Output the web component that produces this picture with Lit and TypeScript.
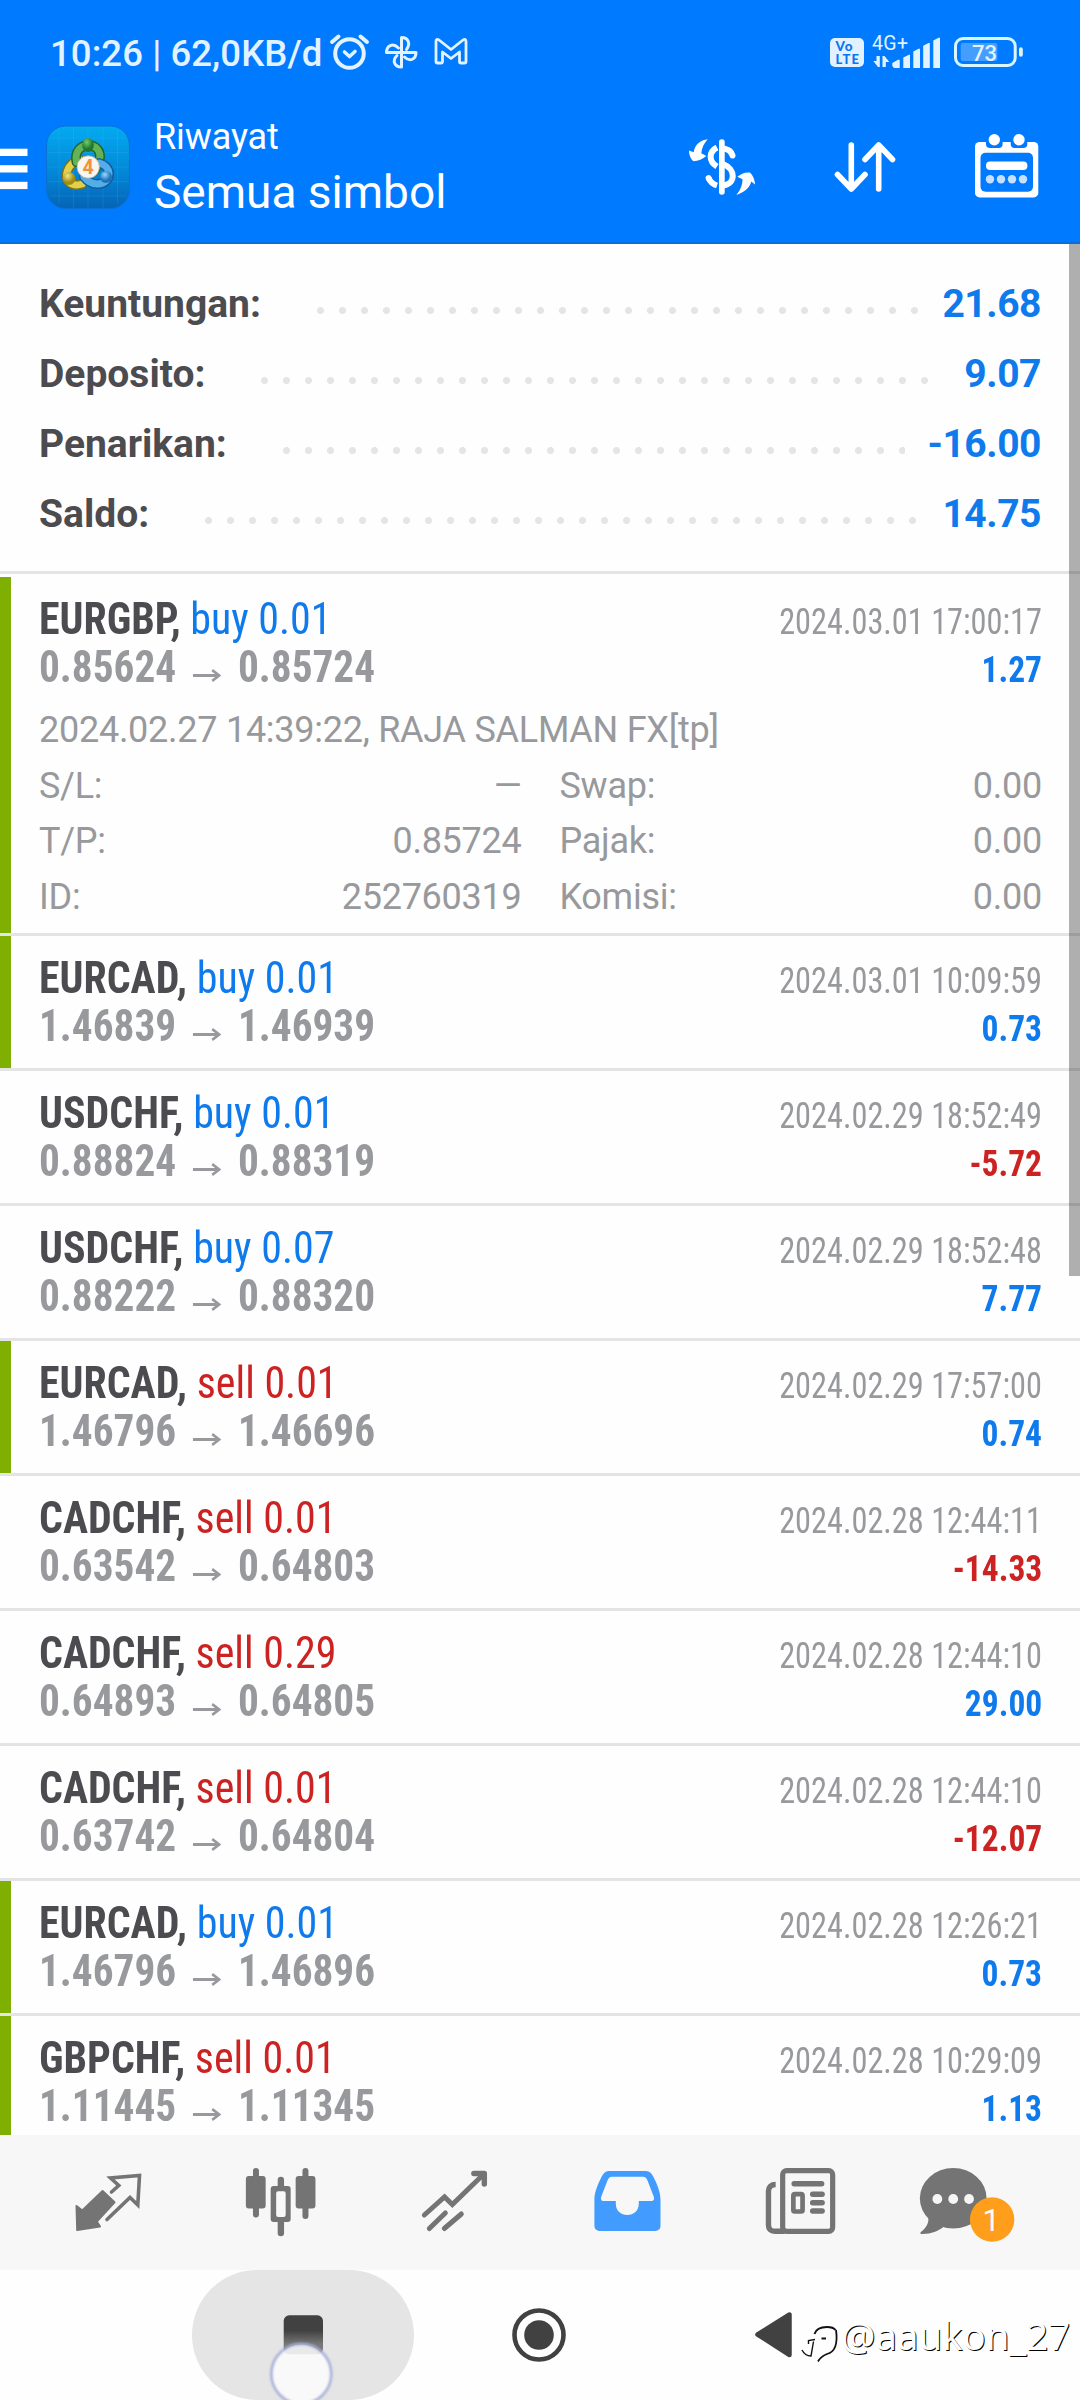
import { LitElement, html, css, svg, nothing } from "lit";
import { customElement, property } from "lit/decorators.js";

interface Deal {
  symbol: string;
  side: "buy" | "sell";
  lots: string;
  open: string;
  close: string;
  time: string;
  profit: string;
  target?: boolean;
  note?: string;
  details?: [string, string][];
}

const DEALS: Deal[] = [
  {
    symbol: "EURGBP", side: "buy", lots: "0.01", open: "0.85624", close: "0.85724",
    time: "2024.03.01 17:00:17", profit: "1.27", target: true,
    note: "2024.02.27 14:39:22, RAJA SALMAN FX[tp]",
    details: [["S/L:", "—"], ["Swap:", "0.00"], ["T/P:", "0.85724"], ["Pajak:", "0.00"], ["ID:", "252760319"], ["Komisi:", "0.00"]],
  },
  { symbol: "EURCAD", side: "buy", lots: "0.01", open: "1.46839", close: "1.46939", time: "2024.03.01 10:09:59", profit: "0.73", target: true },
  { symbol: "USDCHF", side: "buy", lots: "0.01", open: "0.88824", close: "0.88319", time: "2024.02.29 18:52:49", profit: "-5.72" },
  { symbol: "USDCHF", side: "buy", lots: "0.07", open: "0.88222", close: "0.88320", time: "2024.02.29 18:52:48", profit: "7.77" },
  { symbol: "EURCAD", side: "sell", lots: "0.01", open: "1.46796", close: "1.46696", time: "2024.02.29 17:57:00", profit: "0.74", target: true },
  { symbol: "CADCHF", side: "sell", lots: "0.01", open: "0.63542", close: "0.64803", time: "2024.02.28 12:44:11", profit: "-14.33" },
  { symbol: "CADCHF", side: "sell", lots: "0.29", open: "0.64893", close: "0.64805", time: "2024.02.28 12:44:10", profit: "29.00" },
  { symbol: "CADCHF", side: "sell", lots: "0.01", open: "0.63742", close: "0.64804", time: "2024.02.28 12:44:10", profit: "-12.07" },
  { symbol: "EURCAD", side: "buy", lots: "0.01", open: "1.46796", close: "1.46896", time: "2024.02.28 12:26:21", profit: "0.73", target: true },
  { symbol: "GBPCHF", side: "sell", lots: "0.01", open: "1.11445", close: "1.11345", time: "2024.02.28 10:29:09", profit: "1.13", target: true },
];

const SUMMARY: [string, string][] = [
  ["Keuntungan:", "21.68"],
  ["Deposito:", "9.07"],
  ["Penarikan:", "-16.00"],
  ["Saldo:", "14.75"],
];

@customElement("deal-row")
class DealRow extends LitElement {
  @property({ attribute: false }) deal!: Deal;

  static styles = css`
    :host { display: block; border-bottom: 3px solid #e4e4e4; }
    .row { position: relative; box-sizing: border-box; min-height: 132px; padding: 18px 38px 0 39px; }
    .row.target::before { content: ""; position: absolute; left: 0; top: 0; bottom: 0; width: 11px; background: #7faf00; }
    .line { display: flex; justify-content: space-between; align-items: baseline; height: 48px; line-height: 48px; font-size: 44px; white-space: nowrap; }
    .left { font-family: "Roboto Condensed", Roboto, sans-serif; font-stretch: 75%; transform-origin: 0 50%; transform: scaleX(0.953); }
    .right { font-family: "Roboto Condensed", Roboto, sans-serif; font-stretch: 75%; font-size: 36px; font-weight: 430; line-height: 42px; transform-origin: 100% 50%; transform: scaleX(0.897); color: #98999c; }
    .symbol { font-weight: 700; color: #4c4b50; }
    .buy, .gain { color: #0f7aec; }
    .sell, .loss { color: #cc2222; }
    .prices { font-weight: 700; color: #98999d; transform: scaleX(0.938); }
    .profit { font-weight: 700; transform: scaleX(0.93); }
    .right.gain { color: #0f7aec; }
    .right.loss { color: #cc2222; }
    .more { padding: 12px 0 8px; font-size: 36px; line-height: 55.5px; letter-spacing: -0.26px; color: #98999c; }
    .grid { display: grid; grid-template-columns: 1fr 1fr; column-gap: 38px; }
    .pair { display: flex; justify-content: space-between; }
    .arrow { display: inline-block; width: 29.5px; height: 13px; margin: 0 18.2px; }
  `;

  render() {
    const d = this.deal;
    return html`
      <div class="row ${d.target ? "target" : ""}">
        <div class="line">
          <span class="left"><span class="symbol">${d.symbol},</span> <span class=${d.side}>${d.side} ${d.lots}</span></span>
          <span class="right">${d.time}</span>
        </div>
        <div class="line">
          <span class="left prices">${d.open}<svg class="arrow" viewBox="0 0 30 13"><path d="M0 6.5H28M21 1L28.5 6.5L21 12" fill="none" stroke="#98999d" stroke-width="2.8"/></svg>${d.close}</span>
          <span class="right profit ${d.profit.startsWith("-") ? "loss" : "gain"}">${d.profit}</span>
        </div>
        ${d.note
          ? html`<div class="more">
              <div>${d.note}</div>
              <div class="grid">
                ${d.details!.map(([k, v]) => html`<div class="pair"><span>${k}</span><span>${v}</span></div>`)}
              </div>
            </div>`
          : nothing}
      </div>
    `;
  }
}

const TAB_ICONS = [
  svg`<path d="M111.5 2192L118.8 2185.5L110.5 2178L139.5 2175.5L137.8 2205L130 2197.5L107 2219.5" fill="none" stroke="#747474" stroke-width="3.6" stroke-linecap="round"/>
    <path d="M102.6 2191L114.5 2202.3L96.8 2221.5L100 2226.5L77.2 2230L76.5 2206L82.3 2210.5Z" fill="#747474" stroke="#747474" stroke-width="2" stroke-linejoin="round"/>`,
  svg`<g fill="#747474"><rect x="246.2" y="2176" width="19.8" height="32.5" rx="3"/><rect x="253.3" y="2168" width="6" height="49.5" rx="3"/>
    <path fill-rule="evenodd" d="M274 2186H288a3 3 0 0 1 3 3V2219a3 3 0 0 1-3 3H274a3 3 0 0 1-3-3V2189a3 3 0 0 1 3-3ZM278.5 2191.3a2 2 0 0 0-2 2V2215a2 2 0 0 0 2 2H284a2 2 0 0 0 2-2V2193.3a2 2 0 0 0-2-2Z"/>
    <path d="M278 2186V2180a3.2 3.2 0 0 1 6.4 0V2186ZM278 2221V2233a3.2 3.2 0 0 0 6.4 0V2221Z"/>
    <rect x="296" y="2176" width="19.8" height="32.5" rx="3"/><rect x="302.8" y="2168" width="6" height="51" rx="3"/></g>`,
  svg`<g fill="none" stroke="#747474" stroke-width="5" stroke-linecap="round"><path d="M424 2215L444.2 2197L452 2204.5L483 2174.5"/><path stroke-width="5.4" stroke-linejoin="round" d="M473.5 2173.5H484V2184"/><path d="M429 2228.5L445 2213M444 2228.5L461 2214"/></g>`,
  svg`<path fill="#429bff" fill-rule="evenodd" d="M609 2171H646C650 2171 652 2174 654 2178C658 2186 660.5 2193 660.5 2200V2226a5 5 0 0 1-5 5H599.4a5 5 0 0 1-5-5V2200C594.4 2193 597 2186 601 2178C603 2174 605 2171 609 2171ZM612 2176.7C609.5 2176.7 608.5 2178 607.5 2180.5L601.5 2196C600.5 2199 601 2201 604 2201H615.8V2203.5C615.8 2211 621 2215 627.3 2215C633.6 2215 638.8 2211 638.8 2203.5V2201H651C654 2201 654.7 2199 653.5 2196L647.5 2180.5C646.5 2178 645.5 2176.7 643 2176.7Z"/>`,
  svg`<g fill="none" stroke="#747474"><rect x="783" y="2170.7" width="50" height="60.6" rx="4" stroke-width="5.2"/><path stroke-width="5.4" d="M776 2184.5C771.5 2184.5 768.8 2187 768.8 2191V2225C768.8 2229 771 2231.3 775 2231.3H785"/><path stroke-width="5.4" stroke-linecap="round" d="M794.5 2183.7H822M813 2194.3H822.5M813 2202.7H822.5M813 2211H822.5"/><rect x="793.7" y="2194.2" width="9.2" height="17.3" rx="1.5" stroke-width="4.7"/></g>`,
  svg`<g fill="#747474"><ellipse cx="952.9" cy="2198.3" rx="33.4" ry="30.3"/><path d="M926 2213L928 2218.3C928.5 2223 926 2228 920.5 2232Q919 2234 922 2234C931 2234 938 2231 943 2227L950 2220Z"/></g>
    <g fill="#f6f6f6"><circle cx="937" cy="2199" r="4.9"/><circle cx="952.9" cy="2199" r="4.9"/><circle cx="968.7" cy="2199" r="4.9"/></g>
    <circle cx="991.8" cy="2219.5" r="22.2" fill="#ff9e1b"/><text x="991" y="2231" text-anchor="middle" font-family="Roboto, sans-serif" font-size="31" fill="#fff">1</text>`,
];

@customElement("app-root")
class AppRoot extends LitElement {
  static styles = css`
    :host { display: block; width: 1080px; height: 2400px; overflow: hidden; background: #fefefe; font-family: Roboto, "Liberation Sans", sans-serif; }
    .page { display: flex; flex-direction: column; height: 2400px; }
    .top { box-sizing: border-box; height: 244px; background: #007aff; border-bottom: 2px solid #0d6dd6; flex: none; }
    .status { display: flex; height: 100px; padding-left: 50px; color: #e2f3ff; }
    .clock { display: flex; align-items: center; width: 272px; flex: none; font-size: 36.5px; font-weight: 500; line-height: 42px; padding-top: 8px; letter-spacing: 0.08px; white-space: pre; }
    .bar { display: flex; height: 142px; }
    .bar svg, .status svg { display: block; flex: none; }
    .titles { flex: 1; display: flex; flex-direction: column; padding-left: 14px; color: #fff; white-space: nowrap; }
    .sub { font-size: 36px; line-height: 42px; padding-top: 16px; letter-spacing: -0.1px; }
    .main { font-size: 46px; line-height: 56px; padding-top: 6px; }
    .list { flex: 1; min-height: 0; overflow: hidden; position: relative; }
    .summary { box-sizing: border-box; height: 330px; padding: 25px 39px 0; border-bottom: 3px solid #e4e4e4; margin-bottom: 3px; font-size: 39px; font-weight: 700; line-height: 70px; }
    .sum { display: flex; height: 70px; }
    .label { color: #4c4b50; }
    .dots { flex: 1; margin: 38px 23px 25px 56px; background: radial-gradient(circle at 3.5px 3.5px, #e5e5e5 3.1px, transparent 3.9px) 0 0 / 22px 7px repeat-x; }
    .value { color: #0f7aec; letter-spacing: -0.45px; }
    .thumb { position: absolute; right: 0; top: 0; width: 11px; height: 1032px; background: rgba(0, 0, 0, 0.31); }
    .tabs { display: flex; height: 135px; padding: 0 20px; background: #f7f7f7; flex: none; }
    .tabs svg { display: block; flex: 1; min-width: 0; }
    .nav { position: relative; height: 130px; flex: none; }
    .nav svg { display: block; }
    .mark { position: absolute; left: 841px; top: 35px; font: 400 38.3px/60px "Noto Sans", sans-serif; color: #fff; text-shadow: 1px 1px 0 #000; white-space: nowrap; }
  `;

  render() {
    return html`
      <div class="page">
        <header class="top">
          <div class="status">
            <div class="clock">10:26 | 62,0KB/d</div>
            <svg width="758" height="100" viewBox="322 0 758 100">
              <g fill="none" stroke="#e2f3ff" stroke-linecap="round" stroke-linejoin="round">
                <circle cx="349.5" cy="53.5" r="14.3" stroke-width="4"/>
                <path stroke-width="4" d="M332 42L338.5 36.5M360.5 36.5L367 42"/>
                <path stroke-width="3.6" d="M344.5 52L349.5 56.5L355 51.5"/>
                <path stroke-width="3" d="M401.5 52.5V37.5C408 37.5 411 43 406.5 49.5M401.5 52.5H416C416 59 410 62.5 404.5 57M401.5 52.5V67C395 67 391.5 61 397 55.5M401.5 52.5H386.5C386.5 46 392.5 42 398.5 48"/>
                <path stroke-width="2.8" d="M436 61.5V41.5Q436 38.5 439 40L451 49.5L463 40Q466 38.5 466 41.5V61.5Q466 63 464.5 63H461Q459.5 63 459.5 61.5V52L451 58.5L442.5 52V61.5Q442.5 63 441 63H437.5Q436 63 436 61.5Z"/>
              </g>
              <rect x="830" y="38" width="34" height="29" rx="5" fill="#e2f1ff"/>
              <g font-family="Lato, sans-serif" font-weight="900" fill="#0a76ee"><text x="835.5" y="51" font-size="13.5" textLength="17">Vo</text><text x="835.5" y="63.5" font-size="13" textLength="23.5">LTE</text></g>
              <text x="872" y="50" font-family="Roboto, sans-serif" font-size="19.5" fill="#e2f3ff" textLength="36">4G+</text>
              <g fill="#e2f3ff">
                <path d="M879.8 56V67H878L873.3 61H876.5V56ZM882.5 67V56H884.5L889.3 62H885.8V67Z"/>
                <path d="M892.3 66V63L898 59.7H899.7V68H894ZM903.3 68V57.5L909 54.7H910V68ZM913.3 68V51.5L918.5 48.7H920V68ZM923.2 68V45.8L928.5 43H929.8V68ZM933.3 68V40.5L938.5 37.7H940V68Z"/>
                <rect x="960.7" y="43" width="36.6" height="18" rx="2" fill-opacity=".3"/>
                <rect x="1019" y="47.3" width="3.8" height="9.4" rx="1.9"/>
              </g>
              <rect x="955.5" y="38.5" width="59.7" height="27" rx="7.5" fill="none" stroke="#d9f6ff" stroke-width="3"/>
              <text x="984.5" y="61" text-anchor="middle" font-family="Roboto, sans-serif" font-weight="500" font-size="22" fill="#e2f3ff">73</text>
            </svg>
          </div>
          <div class="bar">
            <svg width="140" height="142" viewBox="0 100 140 142">
              <defs>
                <linearGradient id="tile" x1="0" y1="0" x2="0" y2="1"><stop offset="0" stop-color="#04aaf0"/><stop offset=".55" stop-color="#0288d8"/><stop offset="1" stop-color="#0663b5"/></linearGradient>
                <radialGradient id="green" cx=".4" cy=".3"><stop offset="0" stop-color="#7cc96a"/><stop offset="1" stop-color="#1c7a2e"/></radialGradient>
                <radialGradient id="gold" cx=".4" cy=".3"><stop offset="0" stop-color="#f3e884"/><stop offset="1" stop-color="#a08c14"/></radialGradient>
                <radialGradient id="sky" cx=".4" cy=".3"><stop offset="0" stop-color="#9bd6f7"/><stop offset="1" stop-color="#1c74bd"/></radialGradient>
              </defs>
              <g fill="#fff"><rect x="0" y="148.7" width="27.5" height="7.3"/><rect x="0" y="165.2" width="27.5" height="7.3"/><rect x="0" y="181.8" width="27.5" height="7.3"/></g>
              <rect x="46.5" y="126" width="83" height="82.5" rx="19" fill="url(#tile)" stroke="#0b6fd4" stroke-width="1"/>
              <path d="M59 130V204M73.5 127V208M88 127V208M103 127V208M117.5 130V204M50 138H126M48 152.5H128M48 167H128M48 181.5H128M50 196H126" stroke="#5cd0ff" stroke-opacity=".14" stroke-width="1"/>
              <g fill="none" stroke-linecap="round">
                <path d="M82 184C67 189 61 173 73 163L80 160" stroke="#7f7214" stroke-width="10"/><path d="M82 184C67 189 61 173 73 163L80 160" stroke="#e0d04a" stroke-width="7"/>
                <path d="M76.5 162C72 140 104 140 99.5 160C99 163 97 167 95 170" stroke="#20662a" stroke-width="10"/><path d="M76.5 162C72 140 104 140 99.5 160C99 163 97 167 95 170" stroke="#63b356" stroke-width="7"/>
                <path d="M99 163C112 166 112 181 101 183.5C94 185 88 182 84 177" stroke="#135c9e" stroke-width="10"/><path d="M99 163C112 166 112 181 101 183.5C94 185 88 182 84 177" stroke="#53ade6" stroke-width="7"/>
              </g>
              <ellipse cx="88" cy="145" rx="5.8" ry="7" fill="url(#green)"/><circle cx="69" cy="178.5" r="6.5" fill="url(#gold)"/><circle cx="106" cy="177" r="6" fill="url(#sky)"/>
              <circle cx="88.2" cy="167" r="11.2" fill="#f9f5f0" stroke="#b9ad98" stroke-width=".8"/>
              <text x="88" y="174" text-anchor="middle" font-family="Roboto, sans-serif" font-weight="700" font-size="19.5" fill="#f2913c">4</text>
            </svg>
            <div class="titles"><span class="sub">Riwayat</span><span class="main">Semua simbol</span></div>
            <svg width="400" height="142" viewBox="680 100 400 142">
              <g fill="#fff">
                <path d="M707.7 139.3C700.5 140 694.5 145 693.7 152.3L689 150.5C688.8 154 690.5 159 693.5 161.3C698 161 703 159 706.3 156L701.3 153.3C701.7 148 704 143.5 707.7 139.3Z"/>
                <path d="M736.3 195C743.5 192.5 749.5 188.5 751.3 181.5L755 184.5C755 180 752.8 175 749.8 172.5C745 172 740.5 174 737.3 176.8L742.5 179.3C742.5 185.5 740 190.5 736.3 195Z"/>
                <rect x="719" y="139.3" width="5.7" height="55.5" rx="2.8"/>
              </g>
              <g fill="none" stroke="#fff">
                <path stroke-width="6" d="M717 147.5C708.5 152 708.5 161 717 166.5"/>
                <path stroke-width="6" stroke-linecap="round" d="M724.5 148.7C729 149.5 731.5 151.5 732.5 155.5"/>
                <path stroke-width="6" d="M723 164C736 169 736 184 723 185.5M717 185.5C712.5 184 710 181.5 708.7 178"/>
                <path stroke-width="6" stroke-linecap="round" d="M708.6 178L709 179"/>
                <g stroke-width="5.6" stroke-linecap="round" stroke-linejoin="round"><path d="M851.3 145V189M837.5 174.5L851.3 189L865 174.5M878.7 189V145M865 159.5L878.7 145L892.5 159.5"/></g>
              </g>
              <rect x="975" y="142" width="63.3" height="55.4" rx="4.5" fill="#fff"/>
              <path d="M986 141H1002.6V144a4 4 0 0 1-4 4H990a4 4 0 0 1-4-4ZM1010.7 141H1027.3V144a4 4 0 0 1-4 4H1014.7a4 4 0 0 1-4-4Z" fill="#007aff"/>
              <rect x="980.5" y="152.8" width="52.5" height="39" rx="5" fill="#007aff"/>
              <g fill="#fff"><circle cx="994.3" cy="139.7" r="5.7"/><circle cx="1019" cy="139.7" r="5.7"/><rect x="986" y="161.5" width="41.4" height="8.4" rx="4"/></g>
              <g fill="#c6e0ff"><circle cx="990" cy="179.3" r="4.2"/><circle cx="1001" cy="179.3" r="4.2"/><circle cx="1012" cy="179.3" r="4.2"/><circle cx="1023" cy="179.3" r="4.2"/></g>
            </svg>
          </div>
        </header>
        <main class="list">
          <section class="summary">
            ${SUMMARY.map(([k, v]) => html`<div class="sum"><span class="label">${k}</span><span class="dots"></span><span class="value">${v}</span></div>`)}
          </section>
          ${DEALS.map((d) => html`<deal-row .deal=${d}></deal-row>`)}
          <div class="thumb"></div>
        </main>
        <nav class="tabs">
          ${TAB_ICONS.map((icon, i) => html`<svg height="135" viewBox="${20 + (1040 / 6) * i} 2135 ${1040 / 6} 135">${icon}</svg>`)}
        </nav>
        <footer class="nav">
          <svg width="1080" height="130" viewBox="0 2270 1080 130">
            <defs>
              <linearGradient id="key" x1="0" y1="2315" x2="0" y2="2354" gradientUnits="userSpaceOnUse"><stop offset=".4" stop-color="#414141"/><stop offset=".75" stop-color="#777"/></linearGradient>
              <filter id="soft" x="-20%" y="-20%" width="140%" height="140%"><feGaussianBlur stdDeviation="1"/></filter>
            </defs>
            <rect x="192" y="2270" width="222" height="130" rx="65" fill="#e5e5e5"/>
            <rect x="283.7" y="2315.3" width="39.3" height="39" rx="5.5" fill="url(#key)"/>
            <circle cx="301.3" cy="2374" r="29.5" fill="#fbfbfb" fill-opacity=".86"/>
            <circle cx="301.3" cy="2374" r="30" fill="none" stroke="#a9b2da" stroke-width="2.6" filter="url(#soft)"/>
            <circle cx="539" cy="2335" r="24.5" fill="none" stroke="#414141" stroke-width="4.6"/>
            <circle cx="539" cy="2335" r="14.8" fill="#414141"/>
            <path d="M757.5 2334.5L789.5 2314.5V2355Z" fill="#414141" stroke="#414141" stroke-width="4.5" stroke-linejoin="round"/>
            <g fill="none" stroke="#111"><path stroke-width="1.4" d="M802 2350C804 2354 807 2356 811 2356L813.5 2341.5M808.5 2344V2340.5L815 2339.5"/><path stroke-width="2" d="M814.5 2334C816 2329 820 2327 827 2327C831 2327 834 2328 835.5 2330"/><path stroke-width="1.8" d="M836 2330C838 2344 835 2352 827 2354C822 2356 820 2358 818 2361.5M821.5 2338.5H826"/></g>
          </svg>
          <span class="mark">@aaukon_27</span>
        </footer>
      </div>
    `;
  }
}
